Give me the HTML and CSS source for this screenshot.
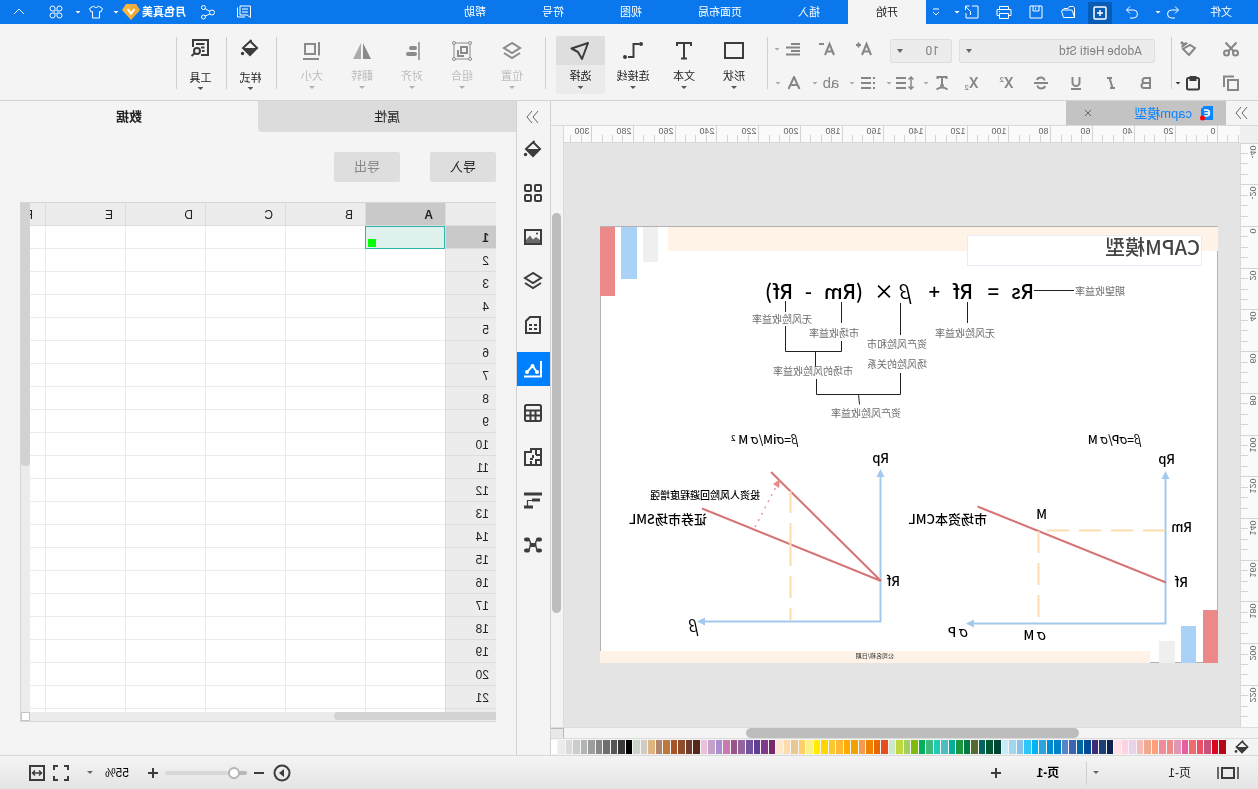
FILE: index.html
```html
<!DOCTYPE html>
<html lang="zh-CN">
<head>
<meta charset="utf-8">
<title>capm模型</title>
<link rel="stylesheet" href="styles.css">
</head>
<body>
<svg class="sprite" aria-hidden="true">
  <defs>
    <symbol id="undo" viewBox="0 0 16 16"><path d="M6 2.5 2.5 6 6 9.500M2.500 6h7a4 4 0 0 1 0 8H6"/></symbol>
    <symbol id="redo" viewBox="0 0 16 16"><path d="M10 2.500 13.500 6 10 9.500M13.500 6h-7a4 4 0 0 0 0 8H10"/></symbol>
    <symbol id="new" viewBox="0 0 16 16"><rect x="2" y="2" width="12" height="12" rx="1"/><path d="M8 5v6M5 8h6"/></symbol>
    <symbol id="folder" viewBox="0 0 16 16"><path d="M1.500 13.500v-10l1-1h4l1.500 2h4l1.500 1.500M1.500 13.500h11l2-6.500-1-1H4.500l-1 1-2 6.500"/></symbol>
    <symbol id="save" viewBox="0 0 16 16"><path d="M2 2h12v12H2zM5 2v5h6V2M8.500 3.500v2"/></symbol>
    <symbol id="print" viewBox="0 0 18 16"><path d="M4.500 5.500v-3h9v3M4.500 11.500H2v-6h14v6h-2.500M4.500 9.500h9v5h-9zM13 7.500h1"/></symbol>
    <symbol id="export" viewBox="0 0 16 16"><path d="M8 2H2v12h12V9M10.500 2h4v4M14.500 2.500 9.500 7.500V11"/></symbol>
    <symbol id="more" viewBox="0 0 10 10"><path d="M2 2h6M2 5l3 3 3-3"/></symbol>
    <symbol id="comment" viewBox="0 0 16 16"><path d="M1.500 2h10.500v9H5L1.500 13.500zM4 5h6M4 8h6M14.500 3.500V13H7"/></symbol>
    <symbol id="share" viewBox="0 0 16 16"><circle cx="4" cy="8.500" r="2.500"/><circle cx="12.500" cy="3.500" r="2"/><circle cx="12.500" cy="13" r="2"/><path d="M6 7.500l5-3M6 10l5 2"/></symbol>
    <symbol id="shirt" viewBox="0 0 16 16"><path d="M5.500 2 1.500 4.500 3 8l1.500-.5V14h7V7.500L13 8l1.500-3.500L10.500 2C9.500 4 6.500 4 5.500 2z"/></symbol>
    <symbol id="apps" viewBox="0 0 14 14"><path d="M6 6V3.500A2.500 2.500 0 1 0 3.500 6zM8 6V3.500A2.500 2.500 0 1 1 10.500 6zM6 8v2.500A2.500 2.500 0 1 1 3.500 8zM8 8v2.500A2.500 2.500 0 1 0 10.500 8z"/></symbol>
    <symbol id="up" viewBox="0 0 12 8"><path d="m1 6 5-5 5 5"/></symbol>
    <symbol id="gem" viewBox="0 0 18 16"><path d="M4 0h10l4 6-9 10L0 6z" fill="#f9b53f" stroke="none"/><path d="M0 6l4-6h5L9 16z" fill="#e8a030" stroke="none" opacity=".5"/><path d="m5.500 5 3.500 4.500L12.500 5" stroke="#fff" stroke-width="2"/></symbol>

    <symbol id="scissors" viewBox="0 0 16 16"><circle cx="3.500" cy="12" r="2.500"/><circle cx="12.500" cy="12" r="2.500"/><path d="M2.500 1.500 11 10.500M13.500 1.500 5 10.500"/></symbol>
    <symbol id="painter" viewBox="0 0 18 16"><path d="m2 7 5-3 7 4-6 6z"/><path d="m9 2.500 6 4.500 1-2-1.500-1L17 2 15 0l-2 2-2-1z" fill="currentColor" stroke="none"/></symbol>
    <symbol id="copy" viewBox="0 0 16 16"><path d="M1 5h10v10H1zM5 1.500h10V12"/></symbol>
    <symbol id="paste" viewBox="0 0 16 16"><rect x="2" y="3" width="12" height="11.500" rx="1.500"/><path d="M5.500 2h5v3h-5z"/></symbol>
    <symbol id="grow" viewBox="0 0 18 16"><path d="m2 14 4.500-11L11 14M3.500 10.500h6M12 4h5M14.500 1.500v5"/></symbol>
    <symbol id="shrink" viewBox="0 0 18 16"><path d="m2 14 4.500-11L11 14M3.500 10.500h6M12 3h5"/></symbol>
    <symbol id="align" viewBox="0 0 16 16"><path d="M1 3h9M1 6.500h14M1 10h9M1 13.500h14"/></symbol>
    <symbol id="bold" viewBox="0 0 14 14"><path d="M3 2h5a2.500 2.500 0 0 1 0 5H3zM3 7h6a2.500 2.500 0 0 1 0 5H3z"/></symbol>
    <symbol id="italic" viewBox="0 0 14 14"><path d="M6 2h5M3 12h5M8.500 2l-3 10"/></symbol>
    <symbol id="underline" viewBox="0 0 14 14"><path d="M3.500 1v5.500a3.500 3.500 0 0 0 7 0V1M2 13h10"/></symbol>
    <symbol id="strike" viewBox="0 0 16 14"><path d="M12 4C11.500 2 9.500 1.500 8 1.500S4.500 2.500 4.500 4.500M4 10c.5 2 2.500 2.500 4 2.500s3.500-1 3.500-3M1 7h14"/></symbol>
    <symbol id="list" viewBox="0 0 16 14"><path d="M5 2h10M5 7h10M5 12h10M1 2h2M1 7h2M1 12h2"/></symbol>
    <symbol id="spacing" viewBox="0 0 20 14"><path d="M9 2h10M9 7h10M9 12h10"/><path stroke-width="1.500" d="M4 1v12M1.500 3.500 4 1l2.500 2.500M1.500 10.500 4 13l2.500-2.500"/></symbol>
    <symbol id="tarc" viewBox="0 0 14 14"><path d="M2.500 3V1h9v2M7 1v8.500M5 9.500h4M1.500 13.500q5.500-4 11 0"/></symbol>
    <symbol id="fontcolor" viewBox="0 0 14 14"><path d="M1.500 13 7 1l5.500 12M3.500 9h7"/></symbol>

    <symbol id="shape" viewBox="0 0 20 20"><path d="M1 2h18v15H1z"/></symbol>
    <symbol id="text" viewBox="0 0 20 20"><path d="M3 5V2h14v3M10 2v16M7 17.500h6"/></symbol>
    <symbol id="connector" viewBox="0 0 20 20"><path d="M4 3h5.500v13H15" /><circle cx="2" cy="3" r="2" fill="currentColor" stroke="none"/><circle cx="18" cy="16" r="2" fill="currentColor" stroke="none"/></symbol>
    <symbol id="pointer" viewBox="0 0 20 20"><path d="M2 2 18.500 7.500 12 11l-4 7z" stroke-linejoin="round"/></symbol>
    <symbol id="layers" viewBox="0 0 20 20"><path d="m10 2 8 5-8 5-8-5zM2 12l8 5 8-5"/></symbol>
    <symbol id="group" viewBox="0 0 20 20"><path stroke-width="1" d="M2 2h16v16H2z"/><path d="M5 6h6v6H5zM14 9v6H8" /><g stroke-width="1" fill="#f4f4f4"><circle cx="2" cy="2" r="1.500"/><circle cx="18" cy="2" r="1.500"/><circle cx="2" cy="18" r="1.500"/><circle cx="18" cy="18" r="1.500"/></g></symbol>
    <symbol id="alignobj" viewBox="0 0 20 20"><path d="M3 1v18" stroke-width="1.500"/><path stroke-width="4" stroke-linecap="round" d="M7 7h4M7 13h7"/></symbol>
    <symbol id="flip" viewBox="0 0 20 20"><path d="M9 2v16H1z" fill="currentColor" stroke="none"/><path d="M11 2v16h8z" fill="currentColor" stroke="none" opacity=".7"/></symbol>
    <symbol id="size" viewBox="0 0 20 20"><path d="M7 3h10v10H7zM3 1v13.500M3 18h16"/></symbol>
    <symbol id="bucket" viewBox="0 0 20 20"><path d="M10 3 3 10l7 7 7-7-8.500-8"/><path d="M3 10h14l-7 7.500z" fill="currentColor" stroke="none"/><circle cx="17.500" cy="15.500" r="1.700" fill="currentColor" stroke="none"/></symbol>
    <symbol id="tools" viewBox="0 0 20 20"><path d="M17 9V2H2v15h7M5.500 6H14M5.500 9.500H9M5.500 13H8"/><circle cx="13" cy="13" r="3"/><path d="m15 15 3.500 3"/></symbol>

    <symbol id="grid" viewBox="0 0 20 20"><rect x="2" y="2" width="6" height="6" rx="1"/><rect x="12" y="2" width="6" height="6" rx="1"/><rect x="2" y="12" width="6" height="6" rx="1"/><rect x="12" y="12" width="6" height="6" rx="1"/></symbol>
    <symbol id="image" viewBox="0 0 20 20"><path d="M2 3h16v14H2z"/><path d="M3 16v-3l4-3 3 2.500 3-4 4 4.500v3z" fill="currentColor" stroke="none" opacity=".75"/><path d="M5 6.500h2" stroke-width="1.500"/></symbol>
    <symbol id="doc" viewBox="0 0 20 20"><path d="M3 2h10l4 4v12H3zM6 10h3M11 10h3M6 14h3M11 14h3"/></symbol>
    <symbol id="chart" viewBox="0 0 20 20"><path d="M2 2v15.500h17M6 13l4.500-6L16 13"/><g fill="currentColor" stroke="none"><circle cx="6" cy="13" r="2"/><circle cx="10.500" cy="7" r="2"/><circle cx="16" cy="13" r="2"/></g></symbol>
    <symbol id="table" viewBox="0 0 20 20"><rect x="2" y="2" width="16" height="16" rx="1.500"/><path d="M2 7.500h16M2 12.500h16M7.500 8v9M12.500 8v9"/></symbol>
    <symbol id="plan" viewBox="0 0 20 20"><path d="M2 2h10v3h6v13H2zM7 3v5M2 8h5M10 11V8M2 13h5v5M12 18v-4M10 12h3" /></symbol>
    <symbol id="gantt" viewBox="0 0 20 20"><path d="M1 3h18" stroke-width="3"/><path d="M3 9h8M10 16h9" stroke-width="3"/><path d="M10 9.500h5.500v6" stroke-width="1.200"/></symbol>
    <symbol id="mind" viewBox="0 0 20 20"><path stroke-width="1.500" d="M4 4.500c6 0 3 11 0 11M16 4.500c-6 0-3 11 0 11M7 10h6"/><g fill="currentColor" stroke="none"><rect x="1" y="2.500" width="6" height="4" rx="2"/><rect x="13" y="2.500" width="6" height="4" rx="2"/><rect x="1" y="13.500" width="6" height="4" rx="2"/><rect x="13" y="13.500" width="6" height="4" rx="2"/><rect x="7.500" y="8" width="5" height="4" rx="1"/></g></symbol>
    <symbol id="chevrons" viewBox="0 0 14 14"><path d="m2 1 5 6-5 6M8 1l5 6-5 6"/></symbol>
    <symbol id="close" viewBox="0 0 8 8"><path d="m1 1 6 6M7 1 1 7"/></symbol>

    <symbol id="pages" viewBox="0 0 24 16"><path d="M6 3h12v10H6z"/><path stroke-width="1.500" d="M2 2v12M22 2v12"/></symbol>
    <symbol id="plus" viewBox="0 0 12 12"><path d="M6 1v10M1 6h10"/></symbol>
    <symbol id="minus" viewBox="0 0 12 12"><path d="M1 6h10"/></symbol>
    <symbol id="play" viewBox="0 0 18 18"><circle cx="9" cy="9" r="7.500"/><path d="m7 5 5 4-5 4z" fill="currentColor" stroke="none"/></symbol>
    <symbol id="full" viewBox="0 0 16 16"><path d="M1 5V1h4M11 1h4v4M15 11v4h-4M5 15H1v-4"/></symbol>
    <symbol id="fit" viewBox="0 0 16 16"><path d="M1 1h14v14H1z"/><path stroke-width="1.500" d="M4 8h8M6 5.500 3.500 8 6 10.500M10 5.500 12.500 8 10 10.500"/></symbol>
  </defs>
</svg>

<div class="app">
  <header class="titlebar">
    <button class="file">文件</button>
    <button class="t22"><svg class="i16"><use href="#undo"/></svg></button>
    <button class="t14"><i class="caret"></i></button>
    <button class="t32"><svg class="i16"><use href="#redo"/></svg></button>
    <button class="t32"><span class="lit"><svg class="i16"><use href="#new"/></svg></span></button>
    <button class="t32"><svg class="i16"><use href="#folder"/></svg></button>
    <button class="t32"><svg class="i16"><use href="#save"/></svg></button>
    <button class="t32"><svg class="i18"><use href="#print"/></svg></button>
    <button class="t36 share-out"><svg class="i16"><use href="#export"/></svg><i class="caret"></i></button>
    <button class="t28"><svg class="i10"><use href="#more"/></svg></button>
    <nav class="menu">
      <button class="on">开始</button><button>插入</button><button>页面布局</button><button>视图</button><button>符号</button><button>帮助</button>
    </nav>
    <div class="account">
      <button class="t28"><svg class="i16"><use href="#comment"/></svg></button>
      <button class="t44"><svg class="i16"><use href="#share"/></svg></button>
      <button class="user">月色真美<svg class="i18"><use href="#gem"/></svg></button>
      <button class="t12"><i class="caret"></i></button>
      <button class="t28"><svg class="i16"><use href="#shirt"/></svg></button>
      <button class="t8"><i class="caret"></i></button>
      <button class="t36"><svg class="i14"><use href="#apps"/></svg></button>
      <button class="t38"><svg class="i12"><use href="#up"/></svg></button>
    </div>
  </header>

  <section class="ribbon">
    <div class="clip">
      <button><svg class="i16"><use href="#scissors"/></svg></button>
      <button><svg class="i18"><use href="#painter"/></svg></button>
      <button><svg class="i16"><use href="#copy"/></svg></button>
      <button class="dark"><svg class="i16"><use href="#paste"/></svg><i class="caret"></i></button>
    </div>
    <i class="rule"></i>
    <div class="font">
      <div class="font-row">
        <label class="pick wide"><select aria-label="字体"><option>Adobe Heiti Std</option></select></label>
        <label class="pick size"><select aria-label="字号"><option>10</option></select></label>
        <button class="t52"><svg class="i18"><use href="#grow"/></svg></button>
        <button class="t22"><svg class="i18"><use href="#shrink"/></svg></button>
        <button class="drop end"><svg class="i16"><use href="#align"/></svg><i class="caret"></i></button>
      </div>
      <div class="font-row second">
        <button class="t35"><svg class="i14"><use href="#bold"/></svg></button>
        <button class="t35"><svg class="i14"><use href="#italic"/></svg></button>
        <button class="t35"><svg class="i14"><use href="#underline"/></svg></button>
        <button class="t35"><svg class="i16"><use href="#strike"/></svg></button>
        <button class="t35 script">X<sup>2</sup></button>
        <button class="t35 script">X<sub>2</sub></button>
        <button class="drop"><svg class="i14"><use href="#tarc"/></svg><i class="caret"></i></button>
        <button class="drop"><svg class="i20"><use href="#spacing"/></svg><i class="caret"></i></button>
        <button class="drop"><svg class="i16"><use href="#list"/></svg><i class="caret"></i></button>
        <button class="drop ab"><span>ab</span><i class="caret"></i></button>
        <button class="drop"><svg class="i14"><use href="#fontcolor"/></svg><i class="caret"></i></button>
      </div>
    </div>
    <i class="rule"></i>
    <div class="bigs">
      <button class="big"><svg><use href="#shape"/></svg><span>形状</span><i class="caret"></i></button>
      <button class="big"><svg><use href="#text"/></svg><span>文本</span><i class="caret"></i></button>
      <button class="big w52"><svg><use href="#connector"/></svg><span>连接线</span><i class="caret"></i></button>
      <button class="big picked"><svg><use href="#pointer"/></svg><span>选择</span><i class="caret"></i></button>
    </div>
    <i class="rule"></i>
    <div class="bigs off">
      <button class="big"><svg><use href="#layers"/></svg><span>位置</span><i class="caret"></i></button>
      <button class="big"><svg><use href="#group"/></svg><span>组合</span><i class="caret"></i></button>
      <button class="big"><svg><use href="#alignobj"/></svg><span>对齐</span><i class="caret"></i></button>
      <button class="big"><svg><use href="#flip"/></svg><span>翻转</span><i class="caret"></i></button>
      <button class="big"><svg><use href="#size"/></svg><span>大小</span><i class="caret"></i></button>
    </div>
    <i class="rule"></i>
    <button class="big tall"><svg><use href="#bucket"/></svg><span>样式</span><i class="caret"></i></button>
    <i class="rule"></i>
    <button class="big tall"><svg><use href="#tools"/></svg><span>工具</span><i class="caret"></i></button>
    <i class="rule"></i>
  </section>

  <main class="work">
    <section class="editor">
      <div class="tabs">
        <button class="fold"><svg class="i14"><use href="#chevrons"/></svg></button>
        <div class="doctab">
          <svg class="i14 docicon" viewBox="0 0 14 14"><path d="M1 0h9l3 3v11H1z" fill="#0c84ff"/><path d="M10 4H7.500a3 3 0 0 0 0 6H10M5 7h4.500" fill="none" stroke="#fff" stroke-width="1.500"/><circle cx="11.500" cy="12" r="2.500" fill="red"/></svg>
          <span>capm模型</span>
          <button class="x"><svg class="i8"><use href="#close"/></svg></button>
        </div>
      </div>
      <div class="stage">
        <i class="corner"></i>
        <svg class="hruler" id="hruler"></svg>
        <i class="gutter"></i>
        <svg class="vruler" id="vruler"></svg>
        <div class="canvas">
          <svg class="page" width="618" height="437" viewBox="0 0 618 437">
            <rect width="618" height="437" fill="#fff"/>
            <path d="M0 .5h618M.5 0v437M617.500 0v437M0 436.500h68" stroke="#b2b2b2" fill="none"/>
            <g stroke="none">
              <rect y="1" width="550" height="24" fill="#fff3e7"/>
              <rect x="68" y="425" width="550" height="12" fill="#fff3e7"/>
              <rect x="560" y="1" width="15" height="35" fill="#efefef"/>
              <rect x="581" y="1" width="16" height="52" fill="#aad2f6"/>
              <rect x="603" y="1" width="15" height="69" fill="#ec8887"/>
              <rect x="43" y="415" width="16" height="22" fill="#efefef"/>
              <rect x="22" y="400" width="15" height="37" fill="#aad2f6"/>
              <rect y="384" width="15" height="53" fill="#ec8887"/>
            </g>
            <rect x="16.500" y="9.500" width="234" height="30" fill="#fff" stroke="#e7ecf8" stroke-width="1"/>
            <text class="heading" x="18" y="29">CAPM模型</text>
            <g class="formula">
              <text x="184" y="73">Rs</text><text x="219" y="73">=</text><text x="245" y="73">Rf</text>
              <text x="278" y="73">+</text><text x="307" y="73" class="it">β</text><text x="324" y="73">×</text>
              <text x="355" y="73">(Rm</text><text x="406" y="73">-</text><text x="425" y="73">Rf)</text>
            </g>
            <path class="ink" d="M144 64.500h40M250.500 76v21M317.500 77v32M317.500 147v21.500h84V153M359.500 168.500l-1 10M376.500 76v21M376.500 115v10.500h56V100M432.500 75v11M402.500 125.500V141"/>
            <g class="note">
              <text x="93" y="69">期望收益率</text>
              <text x="223" y="111">无风险收益率</text>
              <text x="291" y="122">资产风险和市</text>
              <text x="291" y="142">场风险的关系</text>
              <text x="317" y="191">资产风险收益率</text>
              <text x="406" y="97">无风险收益率</text>
              <text x="359" y="111">市场收益率</text>
              <text x="365" y="149">市场的风险收益率</text>
            </g>
            <g class="eq">
              <text x="77" y="218"><tspan class="it">β</tspan>=<tspan class="sg">σ</tspan>P/<tspan class="sg">σ</tspan> M</text>
              <text x="420" y="218"><tspan class="it">β</tspan>=<tspan class="sg">σ</tspan>iM/<tspan class="sg">σ</tspan> M <tspan class="sq" dy="-3">2</tspan></text>
            </g>
            <g fill="none" stroke="#a3caee" stroke-width="2">
              <path d="M52.500 252v145.500H246M337.500 248v147.500H516"/>
            </g>
            <path fill="#a3caee" d="M52.500 245l4 8h-8zM252 397.500l-8-4v8zM337.500 243l4 8h-8zM521 395.500l-8-4v8z"/>
            <g fill="none" stroke="#d67576" stroke-width="2">
              <path d="M52 356.500 240.500 280.500M337 355l110-109M337 355 516 282.500"/>
              <path d="m463 301-22-42" stroke="#e89a9b" stroke-width="1.500" stroke-dasharray="2 5"/>
            </g>
            <path d="m438 253 7 5-6 4z" fill="#ec8887"/>
            <g fill="none" stroke="#fbdcae" stroke-width="2">
              <path d="M53 304.500h126" stroke-dasharray="22 10"/>
              <path d="M179.500 305v86" stroke-dasharray="22 10"/>
              <path d="M427.500 265v130" stroke-dasharray="22 10 43 10 22 10 13"/>
            </g>
            <g class="tag">
              <text x="43" y="238">Rp</text><text x="26" y="306">Rm</text><text x="30" y="361">Rf</text>
              <text x="171" y="293">M</text><text x="231" y="298">市场资本CML</text>
              <text x="172" y="414"><tspan class="sg">σ</tspan> M</text><text x="250" y="411"><tspan class="sg">σ</tspan> P</text>
              <text x="329" y="237">Rp</text><text x="318" y="360">Rf</text>
              <text x="511" y="298">证券市场SML</text><text x="520" y="406" class="it beta">β</text>
            </g>
            <text class="hint" x="458" y="273">投资人风险回避程度增强</text>
            <text class="foot" x="324" y="432">公司名称/日期</text>
          </svg>
        </div>
        <div class="vscroll"><i></i></div>
      </div>
      <div class="hscroll"><i></i><b></b></div>
      <div class="palette"><svg class="i16"><use href="#bucket"/></svg><div class="swatches" id="swatches"></div></div>
    </section>

    <nav class="rail">
      <button><svg class="i14 thin"><use href="#chevrons"/></svg></button>
      <button><svg><use href="#bucket"/></svg></button>
      <button><svg><use href="#grid"/></svg></button>
      <button><svg><use href="#image"/></svg></button>
      <button><svg><use href="#layers"/></svg></button>
      <button><svg><use href="#doc"/></svg></button>
      <button class="on"><svg><use href="#chart"/></svg></button>
      <button><svg><use href="#table"/></svg></button>
      <button><svg><use href="#plan"/></svg></button>
      <button><svg><use href="#gantt"/></svg></button>
      <button><svg><use href="#mind"/></svg></button>
    </nav>

    <aside class="panel">
      <div class="ptabs"><button>属性</button><button class="on">数据</button></div>
      <div class="actions"><button>导入</button><button class="dim">导出</button></div>
      <div class="sheet">
        <div class="view"><table id="sheet"></table></div>
        <div class="sv"><i></i></div>
        <div class="sh"><i></i></div>
        <i class="grip"></i>
      </div>
    </aside>
  </main>

  <footer class="status">
    <button class="layout"><svg class="i24"><use href="#pages"/></svg></button>
    <button class="pagesel">页-1<i class="caret"></i></button>
    <i class="rule"></i>
    <button class="pagetab">页-1</button>
    <button class="addpage"><svg class="i12"><use href="#plus"/></svg></button>
    <div class="zoom">
      <button class="play"><svg class="i18"><use href="#play"/></svg></button>
      <button><svg class="i12"><use href="#minus"/></svg></button>
      <input type="range" min="0" max="100" value="10" aria-label="缩放">
      <button><svg class="i12"><use href="#plus"/></svg></button>
      <button class="pct">55%<i class="caret"></i></button>
      <button><svg class="i16"><use href="#full"/></svg></button>
      <button class="fit"><svg class="i16"><use href="#fit"/></svg></button>
    </div>
  </footer>
</div>
<script src="app.js"></script>
</body>
</html>
```
FILE: styles.css
```css
* { box-sizing: border-box; }
html, body { height: 100%; margin: 0; }
body {
  overflow: hidden;
  background: #f4f4f4;
  font: 12px/16px "Liberation Sans", "Noto Sans CJK SC", sans-serif;
  color: #222;
}
button, select, input { font: inherit; color: inherit; margin: 0; }
button {
  display: flex; align-items: center; justify-content: center;
  flex: none; padding: 0; border: 0; background: none;
}
svg { display: block; flex: none; fill: none; stroke: currentColor; stroke-width: 2; }
.sprite { position: absolute; width: 0; height: 0; }

.i8 { width: 8px; height: 8px; }
.i10 { width: 10px; height: 10px; }
.i12 { width: 12px; height: 12px; }
.i14 { width: 14px; height: 14px; }
.i16 { width: 16px; height: 16px; }
.i18 { width: 18px; height: 16px; }
.i20 { width: 20px; height: 14px; }
.i24 { width: 24px; height: 16px; }
.t8 { width: 8px; } .t12 { width: 12px; } .t14 { width: 14px; }
.t22 { width: 22px; } .t28 { width: 28px; } .t32 { width: 32px; }
.t35 { width: 35px; } .t36 { width: 36px; } .t38 { width: 38px; }
.t44 { width: 44px; } .t52 { width: 52px; }
.caret {
  flex: none; width: 6px; height: 3px; background: currentColor;
  clip-path: polygon(0 0, 100% 0, 50% 100%);
}

/* The whole workspace is shown flipped left to right. */
.app { height: 100vh; display: flex; flex-direction: column; transform: scaleX(-1); }

.titlebar { display: flex; flex: none; height: 24px; background: #0a78ec; color: #fff; font-size: 11px; }
.titlebar svg { stroke-width: 1; }
.file { width: 74px; }
.titlebar .t14 { justify-content: flex-start; padding-left: 1px; }
.share-out { justify-content: flex-end; gap: 4px; padding-right: 2px; }
.titlebar .share-out + .t28 { width: 26px; padding-left: 6px; }
.lit { display: flex; align-items: center; justify-content: center; align-self: stretch; width: 24px; margin-top: 2px; background: #085cb6; }
.titlebar .lit svg { stroke-width: 1.5; }
.menu { display: flex; }
.menu button { padding: 0 28px; }
.menu .on { background: #f4f4f4; color: #222; }
.account { display: flex; margin-left: auto; }
.user { gap: 2px; font-weight: 700; }

.ribbon { display: flex; flex: none; height: 77px; border-bottom: 1px solid #d4d4d4; background: #f4f4f4; color: #868686; }
.rule { flex: none; width: 1px; margin: 13px 0 11px; background: #cfcfcf; }
.clip { display: grid; grid-template: 34px 34px / 54px 32px; padding-top: 8px; }
.clip .dark { color: #3c3c3c; gap: 4px; }
.font { width: 403px; padding-top: 8px; }
.font-row { display: flex; height: 34px; padding-left: 16px; }
.font-row.second { padding-left: 7px; }
.pick { position: relative; display: flex; width: 62px; height: 24px; margin: 7px 0 0 7px; }
.pick.wide { width: 196px; margin-left: 0; }
.pick select { width: 100%; padding: 0 12px; border: 1px solid #dedede; border-radius: 2px; background: #ececec; appearance: none; color: #808080; font-family: Roboto, sans-serif; }
.pick::after { content: ""; position: absolute; right: 12px; top: 10px; width: 6px; height: 4px; background: #666; clip-path: polygon(0 0, 100% 0, 50% 100%); }
.pick.wide::after { right: 7px; }
.pick.size::after { right: 7px; }
.drop { width: 37px; display: grid; grid-template-columns: 24px 8px; justify-items: center; justify-content: start; }
.drop .caret { color: #a8a8a8; }
.drop.end { margin-left: auto; }
.script { font: 500 15px/20px Roboto, sans-serif; }
.script sup, .script sub { font-size: 8px; line-height: 8px; }
.script sup { align-self: flex-start; margin-top: 10px; }
.script sub { align-self: flex-end; margin-bottom: 8px; }
.ab { font-size: 15px; }

.bigs { display: flex; padding: 0 10px 0 8px; }
.big { flex-direction: column; justify-content: flex-start; width: 50px; height: 58px; margin-top: 12px; font-size: 11px; color: #3c3c3c; }
.big svg { width: 20px; height: 29px; padding: 5px 0 4px; }
.big span { line-height: 22px; color: #222; white-space: nowrap; }
.big .caret { margin-top: -1px; color: #555; }
.w52 { width: 52px; margin-right: 2px; }
.picked { width: 49px; border-radius: 2px; background: linear-gradient(#dedede 29px, #ebebeb 29px); }
.off .big { color: #8a8a8a; }
.off .big span { color: #bcbcbc; }
.off .big .caret { color: #b0b0b0; }
.tall { width: 49px; padding-left: 2px; }
.tall svg { padding: 2px 0 7px; }
.tall span { line-height: 26px; }
.tall .caret { margin-top: -4px; }

.work { display: flex; flex: 1; min-height: 0; }
.editor { display: flex; flex-direction: column; flex: 1; min-width: 0; }
.tabs { display: flex; flex: none; height: 24px; }
.fold { width: 32px; color: #666; }
.fold svg, .rail .thin { stroke-width: 1; }
.doctab { display: flex; align-items: center; width: 160px; padding: 0 18px 0 12px; background: #c3c3c3; color: #0c84ff; font-size: 13px; }
.doctab span { margin-left: 8px; padding-top: 2px; }
.docicon { overflow: visible; stroke: none; }
.x { margin-left: auto; color: #666; }
.x svg { stroke-width: 1; }
.stage { display: grid; grid-template: 18px 1fr / 18px 1fr 13px; flex: 1; min-height: 0; }
.corner { background: #f0f0f0; border-top: 1px solid #d8d8d8; }
.hruler, .vruler { width: 100%; height: 100%; background: #fafafa; stroke: #d4d4d4; stroke-width: 1; overflow: hidden; }
.hruler { border: solid #d8d8d8; border-width: 1px 0; }
.vruler { border-right: 1px solid #d8d8d8; min-height: 0; }
.hruler text, .vruler text { fill: #666; stroke: none; font-size: 9px; }
.gutter { border-left: 1px solid #d8d8d8; border-top: 1px solid #d8d8d8; }
.canvas { overflow: hidden; padding: 83px 0 0 22px; background: #e4e4e4; }
.vscroll { padding: 70px 1px 0 2px; border-left: 1px solid #dcdcdc; }
.vscroll i { display: block; height: 400px; border-radius: 5px; background: #bdbdbd; }
.hscroll { display: flex; flex: none; height: 12px; padding-left: 179px; border: solid #dcdcdc; border-width: 1px 0; }
.hscroll i { width: 333px; border-radius: 5px; background: #bdbdbd; }
.hscroll b { width: 13px; margin-left: auto; background: #e8e8e8; border: solid #b8b8b8; border-width: 1px 0 0 1px; }
.palette { display: flex; flex: none; align-items: center; height: 16px; padding-left: 8px; color: #3c3c3c; }
.swatches { display: flex; flex: 1; gap: 1px; height: 14px; margin-left: 8px; }
.swatches i { flex: 1; }

.page { stroke: none; stroke-width: 1; }
.page text { fill: #000; font-family: "Noto Sans CJK SC", sans-serif; font-weight: 500; }
.page .heading { font-size: 20px; fill: #444; }
.formula text { font-size: 20px; }
.ink { stroke: #222; stroke-width: 1; }
.page .note text { font-size: 10px; font-weight: 400; fill: #6e6e6e; }
.eq text { font-size: 12px; }
.eq .sq { font-size: 8px; }
.page .it { font-family: "Open Sans", sans-serif; font-style: italic; }
.page .sg { font-family: "DejaVu Sans", sans-serif; font-style: italic; }
.tag text { font-size: 13px; }
.tag .sg { font-size: 14px; }
.tag .beta { font-size: 16px; }
.page .hint { font-size: 10px; }
.page .foot { font-size: 6px; fill: #444; }

.rail { display: flex; flex-direction: column; align-items: stretch; width: 35px; border: solid #d2d2d2; border-width: 0 1px; color: #3c3c3c; }
.rail button { height: 34px; margin-bottom: 10px; }
.rail button:first-child { height: 31px; margin-bottom: 0; color: #666; }
.rail svg { width: 20px; height: 20px; }
.rail .thin { width: 14px; height: 14px; }
.rail .on { background: #0080ff; color: #fff; }

.panel { display: flex; flex-direction: column; flex: none; width: 516px; }
.ptabs { display: flex; flex: none; height: 31px; font-size: 13px; }
.ptabs button { flex: 1; background: #dcdcdc; border-radius: 0 0 4px 0; }
.ptabs .on { background: none; font-weight: 700; }
.actions { display: flex; gap: 30px; padding: 20px; }
.actions button { width: 66px; height: 30px; border-radius: 2px; background: #dedede; font-size: 13px; }
.actions .dim { color: #888; }
.sheet { display: grid; grid-template: 1fr 9px / 1fr 9px; flex: 1; min-height: 0; margin: 0 20px 33px; border: 1px solid #d6d6d6; border-left: 0; background: #ececec; }
.view { overflow: hidden; min-height: 0; background: #fff; }
table { table-layout: fixed; width: 531px; border-collapse: separate; border-spacing: 0; }
th, td { height: 23px; padding: 0; border: solid #ebebeb; border-width: 0 1px 1px 0; }
th { padding: 2px 0 0 12px; background: #ececec; border-color: #dcdcdc; text-align: left; font-weight: 400; line-height: 20px; }
th:first-child { width: 51px; padding-left: 7px; }
th.hot { background: #c9c9c9; font-weight: 700; }
td.cur { border: 1px solid #2fb5ac; background: #e0f2ee; }
td.cur i { display: block; width: 8px; height: 8px; margin: 11px 2px 0 auto; background: #0f0; }
.sv i { display: block; height: 263px; background: #d2d2d2; border-radius: 0 0 4px 4px; }
.sh i { display: block; width: 162px; height: 8px; background: #d2d2d2; border-radius: 0 4px 4px 0; }
.grip { background: #fff; border: 1px solid #c4c4c4; }

.status { display: flex; align-items: center; flex: none; height: 34px; border-top: 1px solid #d8d8d8; background: linear-gradient(#f4f4f4, #e4e4e4); color: #3c3c3c; }
.layout { width: 60px; }
.pagesel { justify-content: space-between; width: 111px; padding: 0 6px 0 7px; color: #222; }
.status .caret { color: #666; }
.status .rule { align-self: stretch; margin: 6px 0 4px; background: #d0d0d0; }
.pagetab { width: 76px; color: #000; font-weight: 700; }
.addpage { margin-left: 8px; }
.zoom { display: flex; align-items: center; margin-left: auto; padding-right: 29px; gap: 6px; }
.zoom .i18 { width: 18px; height: 18px; }
.zoom .play { margin-right: 2px; }
.zoom .fit { margin-left: 2px; }
.zoom input { width: 82px; height: 14px; appearance: none; background: none; }
.zoom input::-webkit-slider-runnable-track { height: 4px; border-radius: 2px; background: linear-gradient(90deg, #b8b8b8 15%, #d8d8d8 15%); }
.zoom input::-webkit-slider-thumb { appearance: none; width: 12px; height: 12px; margin-top: -4px; border: 2px solid #b4b4b4; border-radius: 50%; background: #fff; }
.pct { gap: 12px; margin: 0 12px; color: #000; }
```
FILE: app.js
```js
const TICK = 10.43;

function ruler(id, origin, length, draw) {
  let out = "";
  for (let n = -8; origin + n * TICK < length; n++) {
    const pos = Math.round(origin + n * TICK) + 0.5;
    if (pos < 0) continue;
    const fits = pos + 20 < length;
    out += draw(pos, n % 4 === 0, n % 4 === 0 && fits ? String(n * 5) : "");
  }
  document.getElementById(id).innerHTML = out;
}

const area = document.querySelector(".canvas").getBoundingClientRect();

ruler("hruler", 22, area.width, (p, major, label) =>
  `<path d="M${p} ${major ? 0 : 9}V18"/>` +
  (label ? `<text x="${p + 2}" y="8">${label}</text>` : ""));

ruler("vruler", 83, area.height, (p, major, label) =>
  `<path d="M${major ? 0 : 10} ${p}H18"/>` +
  (label ? `<text transform="translate(8 ${p + 2}) rotate(-90)" text-anchor="end">${label}</text>` : ""));

const COLORS = (
  "b50716 dc0620 c9517a ea5165 ee6b70 e85d9b e096b4 ee8b87 f08b99 ffa07a f0a88f f5bcb9 e9d3e8 fdd3e2 ffe0e6 " +
  "0c2350 1d3f78 3f2b77 024a94 0067a5 3c66b4 5585c7 0180cc 018bd2 2ba4de 00b4f1 2ec5fb 89c1ea 9fd8ee c9ebf6 " +
  "004433 005931 00665c 556b2f 017a45 1e9640 00b09c 4fbdc0 1cccb3 3fb87c 00b05a 7fba0c a0d060 bfd840 cbe8c8 " +
  "e64e1d eb6500 f08200 f39a52 f0a300 ffaa00 ffb733 f8c830 ffd600 ffec00 fbf085 fcd16b e9c990 fddcae fde8d0 " +
  "78286e 7f3a88 613d96 72529b 92659f 9a5488 c97bb0 a98fd0 c3a2c9 ebc0db " +
  "54291a 703b2c 8d4e29 a75426 bf783c b1846c deb580 d3cac4 cad3c8 " +
  "000000 3b3838 555555 6e6e6e 868786 9c9e9d b1b5b4 cbcccb dadada ebebeb ffffff"
).split(" ");
document.getElementById("swatches").innerHTML =
  COLORS.map(c => `<i style="background:#${c}"></i>`).join("");

const cols = ["A", "B", "C", "D", "E", "F"];
let rows = "<tr><th></th>" + cols.map(c => `<th scope="col"${c === "A" ? ' class="hot"' : ""}>${c}</th>`).join("") + "</tr>";
for (let r = 1; r <= 22; r++) {
  rows += `<tr><th scope="row"${r === 1 ? ' class="hot"' : ""}>${r < 22 ? r : ""}</th>` +
    cols.map(c => r === 1 && c === "A" ? '<td class="cur"><i></i></td>' : "<td></td>").join("") + "</tr>";
}
document.getElementById("sheet").innerHTML = rows;
```
